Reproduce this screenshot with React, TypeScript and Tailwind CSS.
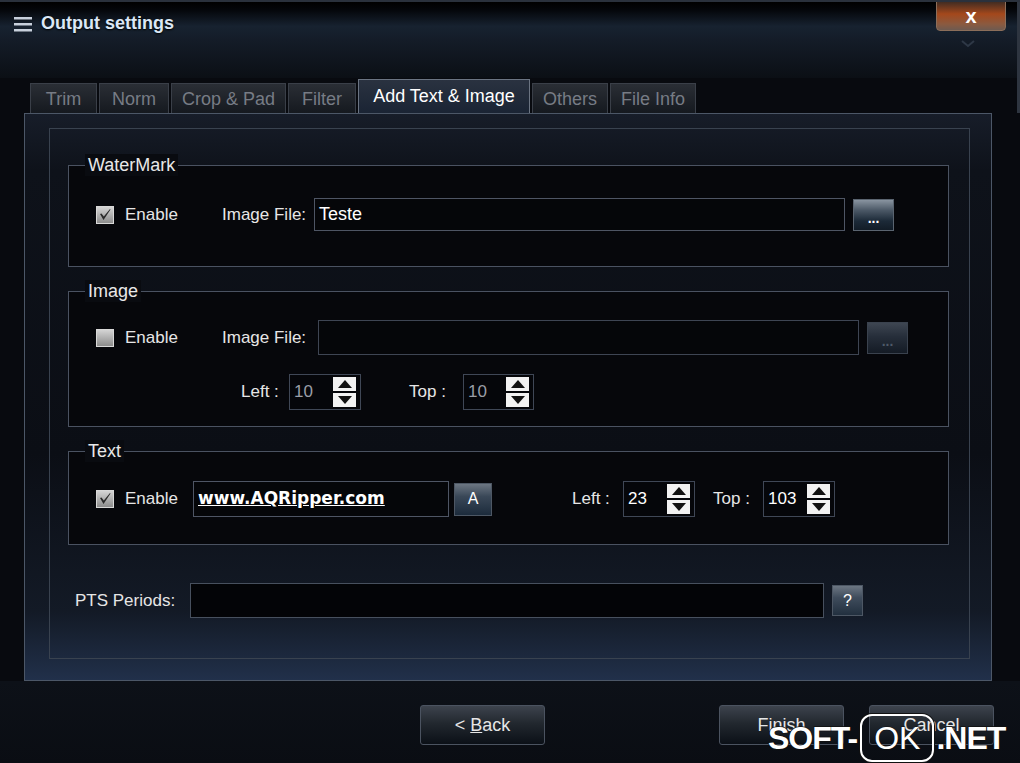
import React from "react";

const Check = ({ checked }: { checked: boolean }) => (
  <div className="w-[18px] h-[18px] border border-[#d8d8d8] bg-[linear-gradient(180deg,#d4d4d4,#8c8c8c)] flex items-center justify-center">
    {checked && (
      <svg width="14" height="14" viewBox="0 0 14 14">
        <path d="M2 6 L5.5 12 L12.5 1.5 L12 1 L5.8 8.5 L3.5 5.5 Z" fill="#2a2a2a" />
      </svg>
    )}
  </div>
);

const Spin = ({ value, dim, w }: { value: string; dim?: boolean; w: string }) => (
  <div className={`${w} h-[36px] border border-[#3f4756] bg-[#05060a] flex items-center pl-[4px] pr-[4px]`}>
    <span className={`text-[17px] ${dim ? "text-[#9a9ea6]" : "text-white"}`}>{value}</span>
    <div className="ml-auto flex flex-col gap-[2px]">
      <div className="w-[23px] h-[14px] bg-[#f2f2f2] flex items-center justify-center">
        <svg width="14" height="8" viewBox="0 0 14 8"><polygon points="7,0 14,8 0,8" fill="#111" /></svg>
      </div>
      <div className="w-[23px] h-[14px] bg-[#f2f2f2] flex items-center justify-center">
        <svg width="14" height="8" viewBox="0 0 14 8"><polygon points="0,0 14,0 7,8" fill="#111" /></svg>
      </div>
    </div>
  </div>
);

const Group = ({ title, className, children }: { title: string; className: string; children: React.ReactNode }) => (
  <div className={`relative border border-[#4a5261] bg-[#06070b] ${className}`}>
    <span className="absolute left-[16px] top-[-12px] px-[3px] bg-[#090b10] text-[18px] leading-[22px] text-[#e8e8e8]">{title}</span>
    {children}
  </div>
);

const tabs = [
  { label: "Trim", w: "w-[67px]" },
  { label: "Norm", w: "w-[70px]" },
  { label: "Crop & Pad", w: "w-[115px]" },
  { label: "Filter", w: "w-[68px]" },
  { label: "Add Text & Image", w: "w-[172px]", active: true },
  { label: "Others", w: "w-[76px]" },
  { label: "File Info", w: "w-[86px]" },
];

const BigButton = ({ children, className }: { children: React.ReactNode; className?: string }) => (
  <div className={`w-[125px] h-[40px] rounded-[3px] border border-[#4b5360] bg-[linear-gradient(180deg,#3d434d_0%,#22282f_45%,#0b1017_100%)] flex items-center justify-center text-[18px] text-[#e6e6e6] ${className ?? ""}`}>
    {children}
  </div>
);

export default function App() {
  return (
    <div className="w-[1020px] h-[763px] relative overflow-hidden bg-[#080a0f] font-['Liberation_Sans',Arial,sans-serif] text-white border-t-2 border-[#2a313c]">
      {/* title bar */}
      <div className="h-[76px] relative bg-[linear-gradient(180deg,#000_0%,#04060a_10%,#172230_32%,#141c28_50%,#0b0f15_100%)] border-r-[3px] border-[#2e3540]">
        <div className="flex items-center pl-[14px] pt-[8px] gap-[9px]">
          <svg width="18" height="16" viewBox="0 0 18 16">
            <rect x="0" y="1" width="18" height="2.5" fill="#c8d0dc" />
            <rect x="0" y="7" width="18" height="2.5" fill="#c8d0dc" />
            <rect x="0" y="13" width="18" height="2.5" fill="#c8d0dc" />
          </svg>
          <span className="text-[18px] font-bold text-[#dce8f6] [text-shadow:0_1px_2px_#000]">Output settings</span>
        </div>
        <div className="absolute left-[936px] top-[-2px] w-[70px] h-[31px] rounded-b-[4px] border border-[#8c6e5a] bg-[linear-gradient(180deg,#3a2a22_0%,#a4481c_45%,#8a5a40_80%,#6e5a50_100%)] flex items-center justify-center">
          <span className="text-[20px] font-bold text-white leading-none">x</span>
        </div>
        <svg className="absolute left-[961px] top-[38px]" width="14" height="8" viewBox="0 0 14 8">
          <path d="M1 1 L7 6 L13 1" stroke="#2e3846" strokeWidth="2" fill="none" />
        </svg>
      </div>

      {/* tabs */}
      <div className="h-[35px] flex items-end gap-[2px] pl-[30px] border-r-[3px] border-[#2e3540]">
        {tabs.map((t) =>
          t.active ? (
            <div key={t.label} className={`${t.w} h-[34px] border border-b-0 border-[#6b7482] bg-[linear-gradient(180deg,#2a3240,#1a2434)] flex items-center justify-center text-[18px] text-white`}>
              {t.label}
            </div>
          ) : (
            <div key={t.label} className={`${t.w} h-[30px] border border-b-0 border-[#3a3f48] bg-[linear-gradient(180deg,#2a2e35,#15191f)] flex items-center justify-center pt-[2px] text-[18px] text-[#777c85]`}>
              {t.label}
            </div>
          )
        )}
      </div>

      {/* panel */}
      <div className="ml-[24px] w-[968px] h-[568px] border border-[#4c5767] bg-[linear-gradient(180deg,#171d29_0%,#0e121a_10%,#0b0e15_60%,#131a26_88%,#21304a_100%)] pt-[14px] pl-[24px]">
        <div className="w-[921px] h-[531px] border border-[#39424f] pt-[36px] pl-[18px] flex flex-col">
          <Group title="WaterMark" className="w-[881px] h-[102px] pt-[32px] pl-[27px]">
            <div className="flex items-center">
              <div className="w-[126px] flex items-center gap-[11px]">
                <Check checked />
                <span className="text-[17px] text-[#e6e6e6]">Enable</span>
              </div>
              <span className="w-[92px] text-[17px] text-[#e6e6e6]">Image File:</span>
              <div className="w-[531px] h-[33px] border border-[#4e5564] bg-[#050609] flex items-center pl-[4px] text-[18px] text-white">Teste</div>
              <div className="ml-[8px] w-[41px] h-[32px] border border-[#5a6470] bg-[linear-gradient(180deg,#8994a0_0%,#4a5765_35%,#1c2a38_70%,#121c27_100%)] flex items-end justify-center pb-[5px] text-[14px] font-bold leading-none text-white">...</div>
            </div>
          </Group>

          <Group title="Image" className="mt-[24px] w-[881px] h-[136px] pt-[28px] pl-[27px]">
            <div className="flex items-center">
              <div className="w-[126px] flex items-center gap-[11px]">
                <Check checked={false} />
                <span className="text-[17px] text-[#e6e6e6]">Enable</span>
              </div>
              <span className="w-[96px] text-[17px] text-[#e6e6e6]">Image File:</span>
              <div className="w-[541px] h-[35px] border border-[#3e4553] bg-[#050609]" />
              <div className="ml-[8px] w-[41px] h-[32px] border border-[#3a424e] bg-[linear-gradient(180deg,#3e4652_0%,#262e3a_45%,#141b25_100%)] flex items-end justify-center pb-[5px] text-[14px] font-bold leading-none text-[#4e5a68]">...</div>
            </div>
            <div className="flex items-center mt-[19px] pl-[145px]">
              <span className="w-[48px] text-[17px] text-[#e6e6e6]">Left :</span>
              <Spin value="10" dim w="w-[72px]" />
              <span className="ml-[48px] w-[54px] text-[17px] text-[#e6e6e6]">Top :</span>
              <Spin value="10" dim w="w-[71px]" />
            </div>
          </Group>

          <Group title="Text" className="mt-[24px] w-[881px] h-[94px] pt-[29px] pl-[27px]">
            <div className="flex items-center">
              <div className="w-[97px] flex items-center gap-[11px]">
                <Check checked />
                <span className="text-[17px] text-[#e6e6e6]">Enable</span>
              </div>
              <div className="w-[256px] h-[36px] border border-[#4e5564] bg-[#050609] flex items-center pl-[4px]">
                <span className="font-bold underline text-white font-['DejaVu_Sans','Liberation_Sans',sans-serif] text-[17px]">www.AQRipper.com</span>
              </div>
              <div className="ml-[5px] w-[38px] h-[33px] border border-[#4d5764] bg-[linear-gradient(180deg,#6c7682_0%,#3a4858_40%,#1c2b3c_100%)] flex items-center justify-center text-[16px] text-white">A</div>
              <span className="ml-[80px] w-[51px] text-[17px] text-[#e6e6e6]">Left :</span>
              <Spin value="23" w="w-[72px]" />
              <span className="ml-[18px] w-[50px] text-[17px] text-[#e6e6e6]">Top :</span>
              <Spin value="103" w="w-[72px]" />
            </div>
          </Group>

          <div className="mt-[38px] ml-[7px] flex items-center">
            <span className="w-[115px] text-[17px] text-[#e6e6e6]">PTS Periods:</span>
            <div className="w-[634px] h-[35px] border border-[#47505e] bg-[#030407]" />
            <div className="ml-[8px] w-[31px] h-[31px] border border-[#4d5764] bg-[linear-gradient(180deg,#6c7682_0%,#3f4c5c_40%,#22303f_100%)] flex items-center justify-center text-[16px] text-white">?</div>
          </div>
        </div>
      </div>

      {/* bottom buttons */}
      <div className="h-[84px] bg-[linear-gradient(180deg,#0d1118,#0a0d13)] pt-[24px] flex">
        <BigButton className="ml-[420px]">
          <span>&lt; <span className="underline">B</span>ack</span>
        </BigButton>
        <BigButton className="ml-[174px]">Finish</BigButton>
        <BigButton className="ml-[25px]">Cancel</BigButton>
      </div>

      {/* site watermark */}
      <div className="absolute left-[768px] top-[712px] flex items-center text-white">
        <span className="text-[32px] font-bold tracking-[-1px] [-webkit-text-stroke:1.5px_#111] [paint-order:stroke_fill]">SOFT-</span>
        <span className="ml-[3px] h-[48px] px-[12px] rounded-[12px] border-2 border-white shadow-[0_0_0_1px_#111] flex items-center text-[32px] [-webkit-text-stroke:1px_#111] [paint-order:stroke_fill]">OK</span>
        <span className="ml-[2px] text-[32px] font-bold tracking-[-1px] [-webkit-text-stroke:1.5px_#111] [paint-order:stroke_fill]">.NET</span>
      </div>
    </div>
  );
}
